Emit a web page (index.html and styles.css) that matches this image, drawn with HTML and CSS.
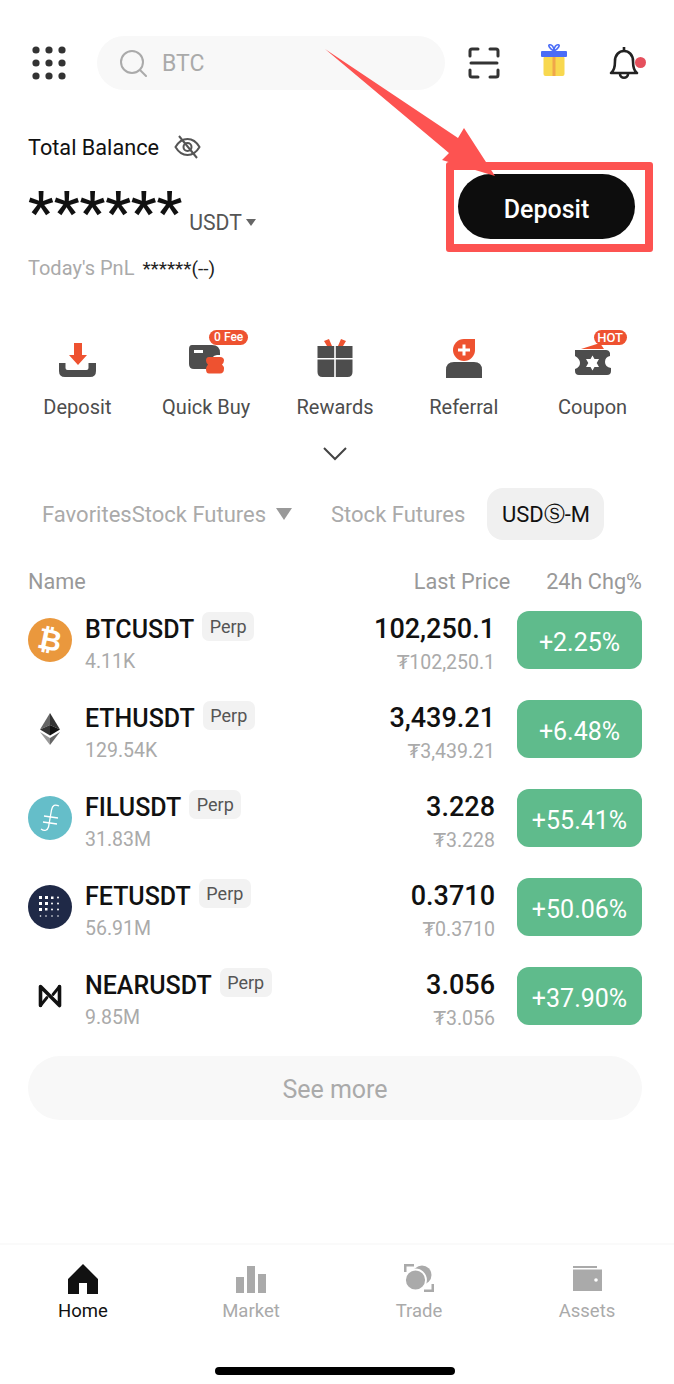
FILE: index.html
```html
<!DOCTYPE html>
<html lang="en">
<head>
    <meta charset="UTF-8">
    <meta name="viewport" content="width=device-width, initial-scale=1.0">
    <title>Home</title>
    <link rel="stylesheet" href="styles.css">
</head>
<body>
    <div class="page">
        <header class="topbar">
            <svg class="grid-icon" width="34" height="34" viewBox="0 0 34 34" fill="#333">
                <circle cx="4" cy="4" r="3.6"/><circle cx="17" cy="4" r="3.6"/><circle cx="30" cy="4" r="3.6"/>
                <circle cx="4" cy="17" r="3.6"/><circle cx="17" cy="17" r="3.6"/><circle cx="30" cy="17" r="3.6"/>
                <circle cx="4" cy="30" r="3.6"/><circle cx="17" cy="30" r="3.6"/><circle cx="30" cy="30" r="3.6"/>
            </svg>
            <div class="search">
                <svg width="28" height="28" viewBox="0 0 28 28" fill="none" stroke="#aaa" stroke-width="2">
                    <circle cx="13" cy="13" r="11"/><path d="M21 21l6 6" stroke-linecap="round"/>
                </svg>
                <span>BTC</span>
            </div>
            <svg class="scan-icon" width="32" height="32" viewBox="0 0 32 32" fill="none" stroke="#333" stroke-width="3" stroke-linecap="round" stroke-linejoin="round">
                <path d="M2 9V4q0-2 2-2h6M22 2h6q2 0 2 2v5M2 23v5q0 2 2 2h6M22 30h6q2 0 2-2v-5"/>
                <path d="M3 16h26"/>
            </svg>
            <svg class="gift-icon" width="26" height="32" viewBox="0 0 26 32">
                <path d="M13 7C9 5 6.500 1 8.500 .8 11 .6 13 3 13 7 13 3 15 .6 17.500 .8 19.500 1 17 5 13 7Z" fill="none" stroke="#4a6cf7" stroke-width="1.600"/>
                <rect x="2.500" y="12" width="21" height="20" rx="2" fill="#f8d84f"/>
                <rect x="11.500" y="12" width="3" height="20" fill="#f0a64a"/>
                <rect x="0" y="7" width="26" height="6" rx="1" fill="#4a6cf7"/>
            </svg>
            <div class="bell">
                <svg width="30" height="34" viewBox="0 0 30 34" fill="none" stroke="#222" stroke-width="2.600" stroke-linejoin="round">
                    <path d="M2 27c3-2 4-6 4-12 0-6 4-10 9-10s9 4 9 10c0 6 1 10 4 12Z"/>
                    <path d="M15 1v4M11 28c0 5 8 5 8 0"/>
                </svg>
                <i class="bell-dot"></i>
            </div>
        </header>

        <section class="balance">
            <div class="balance-info">
                <div class="balance-title">
                    <span>Total Balance</span>
                    <svg width="27" height="24" viewBox="0 0 27 24" fill="none" stroke="#555" stroke-width="2">
                        <path d="M1.500 12C5 6 9 4 13.500 4S22 6 25.500 12C22 18 18 20 13.500 20S5 18 1.500 12Z"/>
                        <circle cx="13.500" cy="12" r="4"/>
                        <path d="M5 1l18 22"/>
                    </svg>
                </div>
                <div class="balance-value">
                    <span class="stars">******</span>
                    <span class="unit">USDT</span>
                    <i class="unit-caret"></i>
                </div>
                <div class="pnl">Today's PnL <b>******(--)</b></div>
            </div>
            <button class="deposit-btn">Deposit</button>
        </section>

        <nav class="shortcuts">
            <div class="shortcut">
                <div class="shortcut-icon">
                    <svg width="38" height="40" viewBox="0 0 38 40">
                        <path d="M16 3h8v12h5L20 25 11 15h5Z" fill="#ee5230"/>
                        <path d="M1 23h6.500v5q0 2 2 2h19q2 0 2-2v-5H38v8q0 6-6 6H7q-6 0-6-6Z" fill="#4d4d4d"/>
                    </svg>
                </div>
                <span>Deposit</span>
            </div>
            <div class="shortcut">
                <div class="shortcut-icon">
                    <svg width="38" height="40" viewBox="0 0 38 40">
                        <path d="M5 5h20q8 0 8 8v2h-3q-6 1-6 7v7H7q-5 0-5-5V9q0-4 3-4Z" fill="#4d4d4d"/>
                        <rect x="7" y="10" width="9" height="3" fill="#fff"/>
                        <path d="M22 17h11q4 0 4 3.500 0 2-2 4 2 2 2 4 0 5-4 5H22q-3 0-3-4.500 0-2 2-4.500-2-2-2-4 0-3.500 3-3.500Z" fill="#ee5230"/>
                    </svg>
                    <em class="tag tag-fee">0 Fee</em>
                </div>
                <span>Quick Buy</span>
            </div>
            <div class="shortcut">
                <div class="shortcut-icon">
                    <svg width="38" height="40" viewBox="0 0 38 40">
                        <path d="M8 1l5-2 3 7h-5ZM30 1l-5-2-3 7h5Z" fill="#ee5230"/>
                        <path d="M1.500 6h16.700v12H1.500ZM19.800 6h16.700v12H19.800ZM1.500 19.500h16.700V37H6.500q-5 0-5-5ZM19.800 19.500h16.700V32q0 5-5 5H19.800Z" fill="#4d4d4d"/>
                    </svg>
                </div>
                <span>Rewards</span>
            </div>
            <div class="shortcut">
                <div class="shortcut-icon">
                    <svg width="38" height="40" viewBox="0 0 38 40">
                        <path d="M19-1h11v11a11 11 0 1 1-11-11Z" fill="#ee5230"/>
                        <path d="M17.500 4.500h3v4h4.500v3h-4.500v4h-3v-4H13v-3h4.500Z" fill="#fff"/>
                        <path d="M1 38v-8q0-8 8-8h20q8 0 8 8v8Z" fill="#4d4d4d"/>
                    </svg>
                </div>
                <span>Referral</span>
            </div>
            <div class="shortcut">
                <div class="shortcut-icon">
                    <svg width="38" height="40" viewBox="0 0 38 40">
                        <path d="M7 9L26 3l4 6Z" fill="#ee5230"/>
                        <path d="M1 10h31q3 0 4 3v3q-5 1-5 6t6 6v3q0 4-4 4H5q-4 0-4-4v-2q5-2 5-6t-5-7Z" fill="#4d4d4d"/>
                        <path d="M18.500 15.500l6.500 11.500H12ZM18.500 30.500L12 19h13Z" fill="#fff"/>
                    </svg>
                    <em class="tag tag-hot">HOT</em>
                </div>
                <span>Coupon</span>
            </div>
        </nav>

        <div class="expand">
            <svg width="24" height="14" viewBox="0 0 24 14" fill="none" stroke="#444" stroke-width="2"><path d="M1 1l11 11L23 1"/></svg>
        </div>

        <div class="tabs">
            <span class="tab tab-first">FavoritesStock Futures</span>
            <i class="tab-caret"></i>
            <span class="tab tab-second">Stock Futures</span>
            <span class="tab tab-active">USD<span class="circled">Ⓢ</span>-M</span>
        </div>

        <div class="list-head">
            <span class="head-name">Name</span>
            <span>Last Price</span>
            <span class="head-chg">24h Chg%</span>
        </div>

        <div class="row">
            <div class="coin">
                <svg width="44" height="44" viewBox="0 0 44 44">
                    <circle cx="22" cy="22" r="22" fill="#ea983d"/>
                    <text x="22" y="32" text-anchor="middle" transform="rotate(12 22 22)" class="coin-letter">₿</text>
                </svg>
            </div>
            <div class="name-col">
                <div class="name-line"><span class="symbol">BTCUSDT</span><span class="perp">Perp</span></div>
                <div class="sub">4.11K</div>
            </div>
            <div class="price-col">
                <div class="price">102,250.1</div>
                <div class="sub">₮102,250.1</div>
            </div>
            <div class="change">+2.25%</div>
        </div>

        <div class="row">
            <div class="coin">
                <svg width="20" height="32" viewBox="0 0 20 32">
                    <path d="M10 0L0 16.500l10-4.500Z" fill="#666"/>
                    <path d="M10 0l10 16.500-10-4.500Z" fill="#333"/>
                    <path d="M0 16.500L10 12v10.500Z" fill="#333"/>
                    <path d="M20 16.500L10 12v10.500Z" fill="#111"/>
                    <path d="M0 19l10 13v-7Z" fill="#999"/>
                    <path d="M20 19L10 32v-7Z" fill="#666"/>
                </svg>
            </div>
            <div class="name-col">
                <div class="name-line"><span class="symbol">ETHUSDT</span><span class="perp">Perp</span></div>
                <div class="sub">129.54K</div>
            </div>
            <div class="price-col">
                <div class="price">3,439.21</div>
                <div class="sub">₮3,439.21</div>
            </div>
            <div class="change">+6.48%</div>
        </div>

        <div class="row">
            <div class="coin">
                <svg width="44" height="44" viewBox="0 0 44 44" fill="none" stroke="#fff" stroke-width="1.300">
                    <circle cx="22" cy="22" r="22" fill="#65bec9" stroke="none"/>
                    <path d="M31 10c-4-2-6.500-1-7.500 4l-3 17c-1 3.500-4 4.500-7.500 2"/>
                    <path d="M16 20l14 2M15 26l14 2"/>
                </svg>
            </div>
            <div class="name-col">
                <div class="name-line"><span class="symbol">FILUSDT</span><span class="perp">Perp</span></div>
                <div class="sub">31.83M</div>
            </div>
            <div class="price-col">
                <div class="price">3.228</div>
                <div class="sub">₮3.228</div>
            </div>
            <div class="change">+55.41%</div>
        </div>

        <div class="row">
            <div class="coin">
                <svg width="44" height="44" viewBox="0 0 44 44" fill="#fff">
                    <circle cx="22" cy="22" r="22" fill="#1f2947"/>
                    <rect x="11" y="11" width="3" height="3"/><rect x="17" y="11" width="3" height="3"/><rect x="23" y="11.500" width="2.500" height="2.500"/><circle cx="30" cy="12.500" r="1"/>
                    <rect x="11" y="17" width="3" height="3"/><rect x="17" y="17" width="3" height="3"/><circle cx="24" cy="18.500" r="1"/><circle cx="30" cy="18.500" r="1"/>
                    <rect x="11" y="23" width="3" height="3"/><rect x="17" y="23" width="2.500" height="2.500"/><circle cx="24" cy="24.500" r="1"/><circle cx="30" cy="24.500" r="1"/>
                    <circle cx="12.500" cy="31" r=".8"/><circle cx="18" cy="31" r=".8"/><circle cx="24" cy="31" r=".8"/><circle cx="30" cy="31" r=".8"/>
                </svg>
            </div>
            <div class="name-col">
                <div class="name-line"><span class="symbol">FETUSDT</span><span class="perp">Perp</span></div>
                <div class="sub">56.91M</div>
            </div>
            <div class="price-col">
                <div class="price">0.3710</div>
                <div class="sub">₮0.3710</div>
            </div>
            <div class="change">+50.06%</div>
        </div>

        <div class="row">
            <div class="coin">
                <svg width="24" height="24" viewBox="0 0 24 24" fill="none" stroke="#111" stroke-width="3.600" stroke-linejoin="round" stroke-linecap="round">
                    <path d="M2.500 21.500V2.500L21.500 21.500V2.500"/>
                    <path d="M2.500 21.500l6.500-8M21.500 2.500l-6.500 8" stroke-width="2.800"/>
                </svg>
            </div>
            <div class="name-col">
                <div class="name-line"><span class="symbol">NEARUSDT</span><span class="perp">Perp</span></div>
                <div class="sub">9.85M</div>
            </div>
            <div class="price-col">
                <div class="price">3.056</div>
                <div class="sub">₮3.056</div>
            </div>
            <div class="change">+37.90%</div>
        </div>

        <div class="see-more">See more</div>

        <footer class="bottom">
            <nav class="tabbar">
                <div class="nav-item nav-active">
                    <svg width="32" height="30" viewBox="0 0 32 30" fill="#111">
                        <path d="M16 0l15 15v15H20V19h-8v11H1V15Z"/>
                    </svg>
                    <span>Home</span>
                </div>
                <div class="nav-item">
                    <svg width="32" height="30" viewBox="0 0 32 30" fill="#aaa">
                        <rect x="1" y="13" width="8" height="16"/><rect x="12" y="2" width="8" height="27"/><rect x="23" y="10" width="8" height="19"/>
                    </svg>
                    <span>Market</span>
                </div>
                <div class="nav-item">
                    <svg width="32" height="30" viewBox="0 0 32 30" fill="#aaa">
                        <path d="M1 0h10v2.500H3.500V8H1ZM31 28H21v-2.500h7.500V20H31Z"/>
                        <circle cx="19" cy="11" r="9.500"/>
                        <circle cx="12.500" cy="16" r="10.500" stroke="#fff" stroke-width="1.800"/>
                    </svg>
                    <span>Trade</span>
                </div>
                <div class="nav-item">
                    <svg width="32" height="30" viewBox="0 0 32 30" fill="#aaa">
                        <path d="M2 2h24v2H2Z"/><path d="M2 5.500h29V27H2Z"/>
                        <circle cx="25" cy="16" r="1.800" fill="#fff"/>
                    </svg>
                    <span>Assets</span>
                </div>
            </nav>
            <div class="home-bar"></div>
        </footer>

        <!-- annotation drawn on top of the screenshot -->
        <svg class="arrow" width="674" height="200" viewBox="0 0 674 200">
            <path d="M325 49L458 138L464 128L495 176L442 160L449 153Z" fill="#fd5351"/>
        </svg>
        <div class="highlight"></div>
    </div>
</body>
</html>
```

FILE: styles.css
```css
* {
    box-sizing: border-box;
}
body {
    margin: 0;
    background: #fff;
    font-family: 'Roboto', 'DejaVu Sans', sans-serif;
    color: #111;
}
.page {
    position: relative;
    width: 674px;
    height: 1384px;
    display: flex;
    flex-direction: column;
    overflow: hidden;
}
.topbar {
    display: flex;
    align-items: center;
    height: 54px;
    margin-top: 36px;
    padding: 0 33px 0 32px;
}
.grid-icon {
    flex: none;
}
.search {
    display: flex;
    align-items: center;
    gap: 15px;
    width: 348px;
    height: 54px;
    margin-left: 31px;
    padding-left: 22px;
    border-radius: 27px;
    background: #f8f8f8;
    color: #aaa;
    font-size: 23px;
}
.scan-icon {
    margin-left: 23px;
}
.gift-icon {
    margin: -6px 0 0 41px;
}
.bell {
    position: relative;
    width: 30px;
    height: 34px;
    margin-left: 42px;
}
.bell svg {
    display: block;
}
.bell-dot {
    position: absolute;
    top: 11px;
    left: 26px;
    width: 11px;
    height: 11px;
    border-radius: 50%;
    background: #e5505d;
}
.balance {
    display: flex;
    justify-content: space-between;
    height: 200px;
    padding: 42px 39px 0 28px;
}
.balance-title {
    display: flex;
    align-items: center;
    gap: 15px;
    height: 30px;
    font-size: 21.700px;
}
.balance-value {
    display: flex;
    align-items: flex-end;
    height: 52px;
    margin-top: 22px;
}
.stars {
    align-self: flex-start;
    height: 46px;
    font-size: 58px;
    line-height: 56px;
    font-weight: 500;
}
.unit {
    margin-left: 7px;
    font-size: 21.200px;
    line-height: 26px;
    color: #555;
}
.unit-caret {
    margin: 0 0 10px 4px;
    border-top: 7px solid #666;
    border-left: 5px solid transparent;
    border-right: 5px solid transparent;
}
.pnl {
    margin-top: 19px;
    font-size: 20px;
    line-height: 26px;
    color: #aaa;
}
.pnl b {
    margin-left: 3px;
    font-weight: 400;
    font-size: 19px;
    color: #222;
}
.deposit-btn {
    width: 177px;
    height: 65px;
    margin-top: 42px;
    padding: 5px 0 0;
    border: none;
    border-radius: 33px;
    background: #0d0d0d;
    color: #fff;
    font-family: inherit;
    font-size: 25px;
    font-weight: 500;
}
.shortcuts {
    display: grid;
    grid-template-columns: repeat(5, 128.800px);
    padding: 0 13px;
    margin-top: 50px;
}
.shortcut {
    display: flex;
    flex-direction: column;
    align-items: center;
    color: #4d4d4d;
    font-size: 20px;
    line-height: 26px;
}
.shortcut-icon {
    position: relative;
    width: 38px;
    height: 40px;
    margin-bottom: 14px;
}
.shortcut-icon svg {
    display: block;
    overflow: visible;
}
.tag {
    position: absolute;
    top: -10px;
    height: 15px;
    border-radius: 8px;
    background: #ee5230;
    color: #fff;
    font-style: normal;
    font-weight: 500;
    font-size: 12px;
    line-height: 15px;
    text-align: center;
    white-space: nowrap;
}
.tag-fee {
    left: 22px;
    width: 39px;
}
.tag-hot {
    left: 20px;
    width: 33px;
    font-size: 13px;
}
.expand {
    display: flex;
    justify-content: center;
    margin-top: 27px;
    padding-right: 4px;
}
.tabs {
    display: flex;
    align-items: center;
    height: 52px;
    margin-top: 27px;
    padding-left: 42px;
    font-size: 22px;
    color: #aaa;
}
.tab-caret {
    margin-left: 10px;
    border-top: 12px solid #999;
    border-left: 8.500px solid transparent;
    border-right: 8.500px solid transparent;
}
.tab-second {
    margin-left: 39px;
}
.tab-active {
    display: flex;
    align-items: center;
    justify-content: center;
    width: 117px;
    height: 52px;
    margin-left: 22px;
    border-radius: 16px;
    background: #f0f0f0;
    color: #111;
}
.circled {
    font-family: 'DejaVu Sans', sans-serif;
    font-size: 21px;
}
.list-head {
    display: flex;
    align-items: center;
    height: 27px;
    margin-top: 28px;
    padding: 0 32px 0 28px;
    font-size: 21.700px;
    color: #999;
}
.head-name {
    flex: 1;
}
.head-chg {
    margin-left: 36px;
}
.row {
    display: flex;
    align-items: center;
    height: 89px;
    padding: 0 32px 0 28px;
}
.coin {
    display: flex;
    align-items: center;
    justify-content: center;
    width: 44px;
    height: 44px;
    margin-right: 14px;
}
.coin-letter {
    font-family: 'DejaVu Sans', sans-serif;
    font-size: 29px;
    font-weight: 700;
    fill: #fff;
}
.name-col {
    flex: 1;
    margin-left: -1px;
    padding-top: 8px;
}
.name-line {
    display: flex;
    align-items: center;
    gap: 8px;
    height: 32px;
}
.symbol {
    font-size: 25px;
    font-weight: 500;
}
.perp {
    height: 29px;
    padding: 0 7.500px;
    margin-top: -6px;
    border-radius: 7px;
    background: #f2f2f2;
    color: #555;
    font-size: 18px;
    line-height: 29px;
}
.sub {
    margin-top: 5px;
    color: #aaa;
    font-size: 19.500px;
    line-height: 24px;
}
.price-col {
    margin-right: 22px;
    padding-top: 8px;
    text-align: right;
}
.price {
    height: 32px;
    font-size: 27px;
    font-weight: 500;
    line-height: 32px;
}
.price + .sub {
    margin-top: 6px;
}
.change {
    display: flex;
    align-items: center;
    justify-content: center;
    width: 125px;
    height: 58px;
    padding-top: 5px;
    border-radius: 12px;
    background: #5fbb8c;
    color: #fff;
    font-size: 25px;
}
.see-more {
    height: 64px;
    margin: 16px 32px 0 28px;
    border-radius: 32px;
    background: #f8f8f8;
    color: #aaa;
    font-size: 25px;
    line-height: 68px;
    text-align: center;
}
.bottom {
    margin-top: auto;
    height: 141px;
    border-top: 2px solid #fafafa;
}
.tabbar {
    display: grid;
    grid-template-columns: repeat(4, 168px);
    justify-content: start;
    margin-left: -1px;
    padding-top: 19px;
}
.nav-item {
    display: flex;
    flex-direction: column;
    align-items: center;
    color: #aaa;
    font-size: 18.500px;
    line-height: 24px;
}
.nav-item svg {
    margin-bottom: 5px;
}
.nav-active {
    color: #111;
}
.home-bar {
    width: 240px;
    height: 8px;
    margin: 44px 0 0 215px;
    border-radius: 4px;
    background: #000;
}
.arrow {
    position: absolute;
    top: 0;
    left: 0;
}
.highlight {
    position: absolute;
    top: 162px;
    left: 446px;
    width: 207px;
    height: 90px;
    border: 8px solid #fd5351;
    border-radius: 3px;
}
```
